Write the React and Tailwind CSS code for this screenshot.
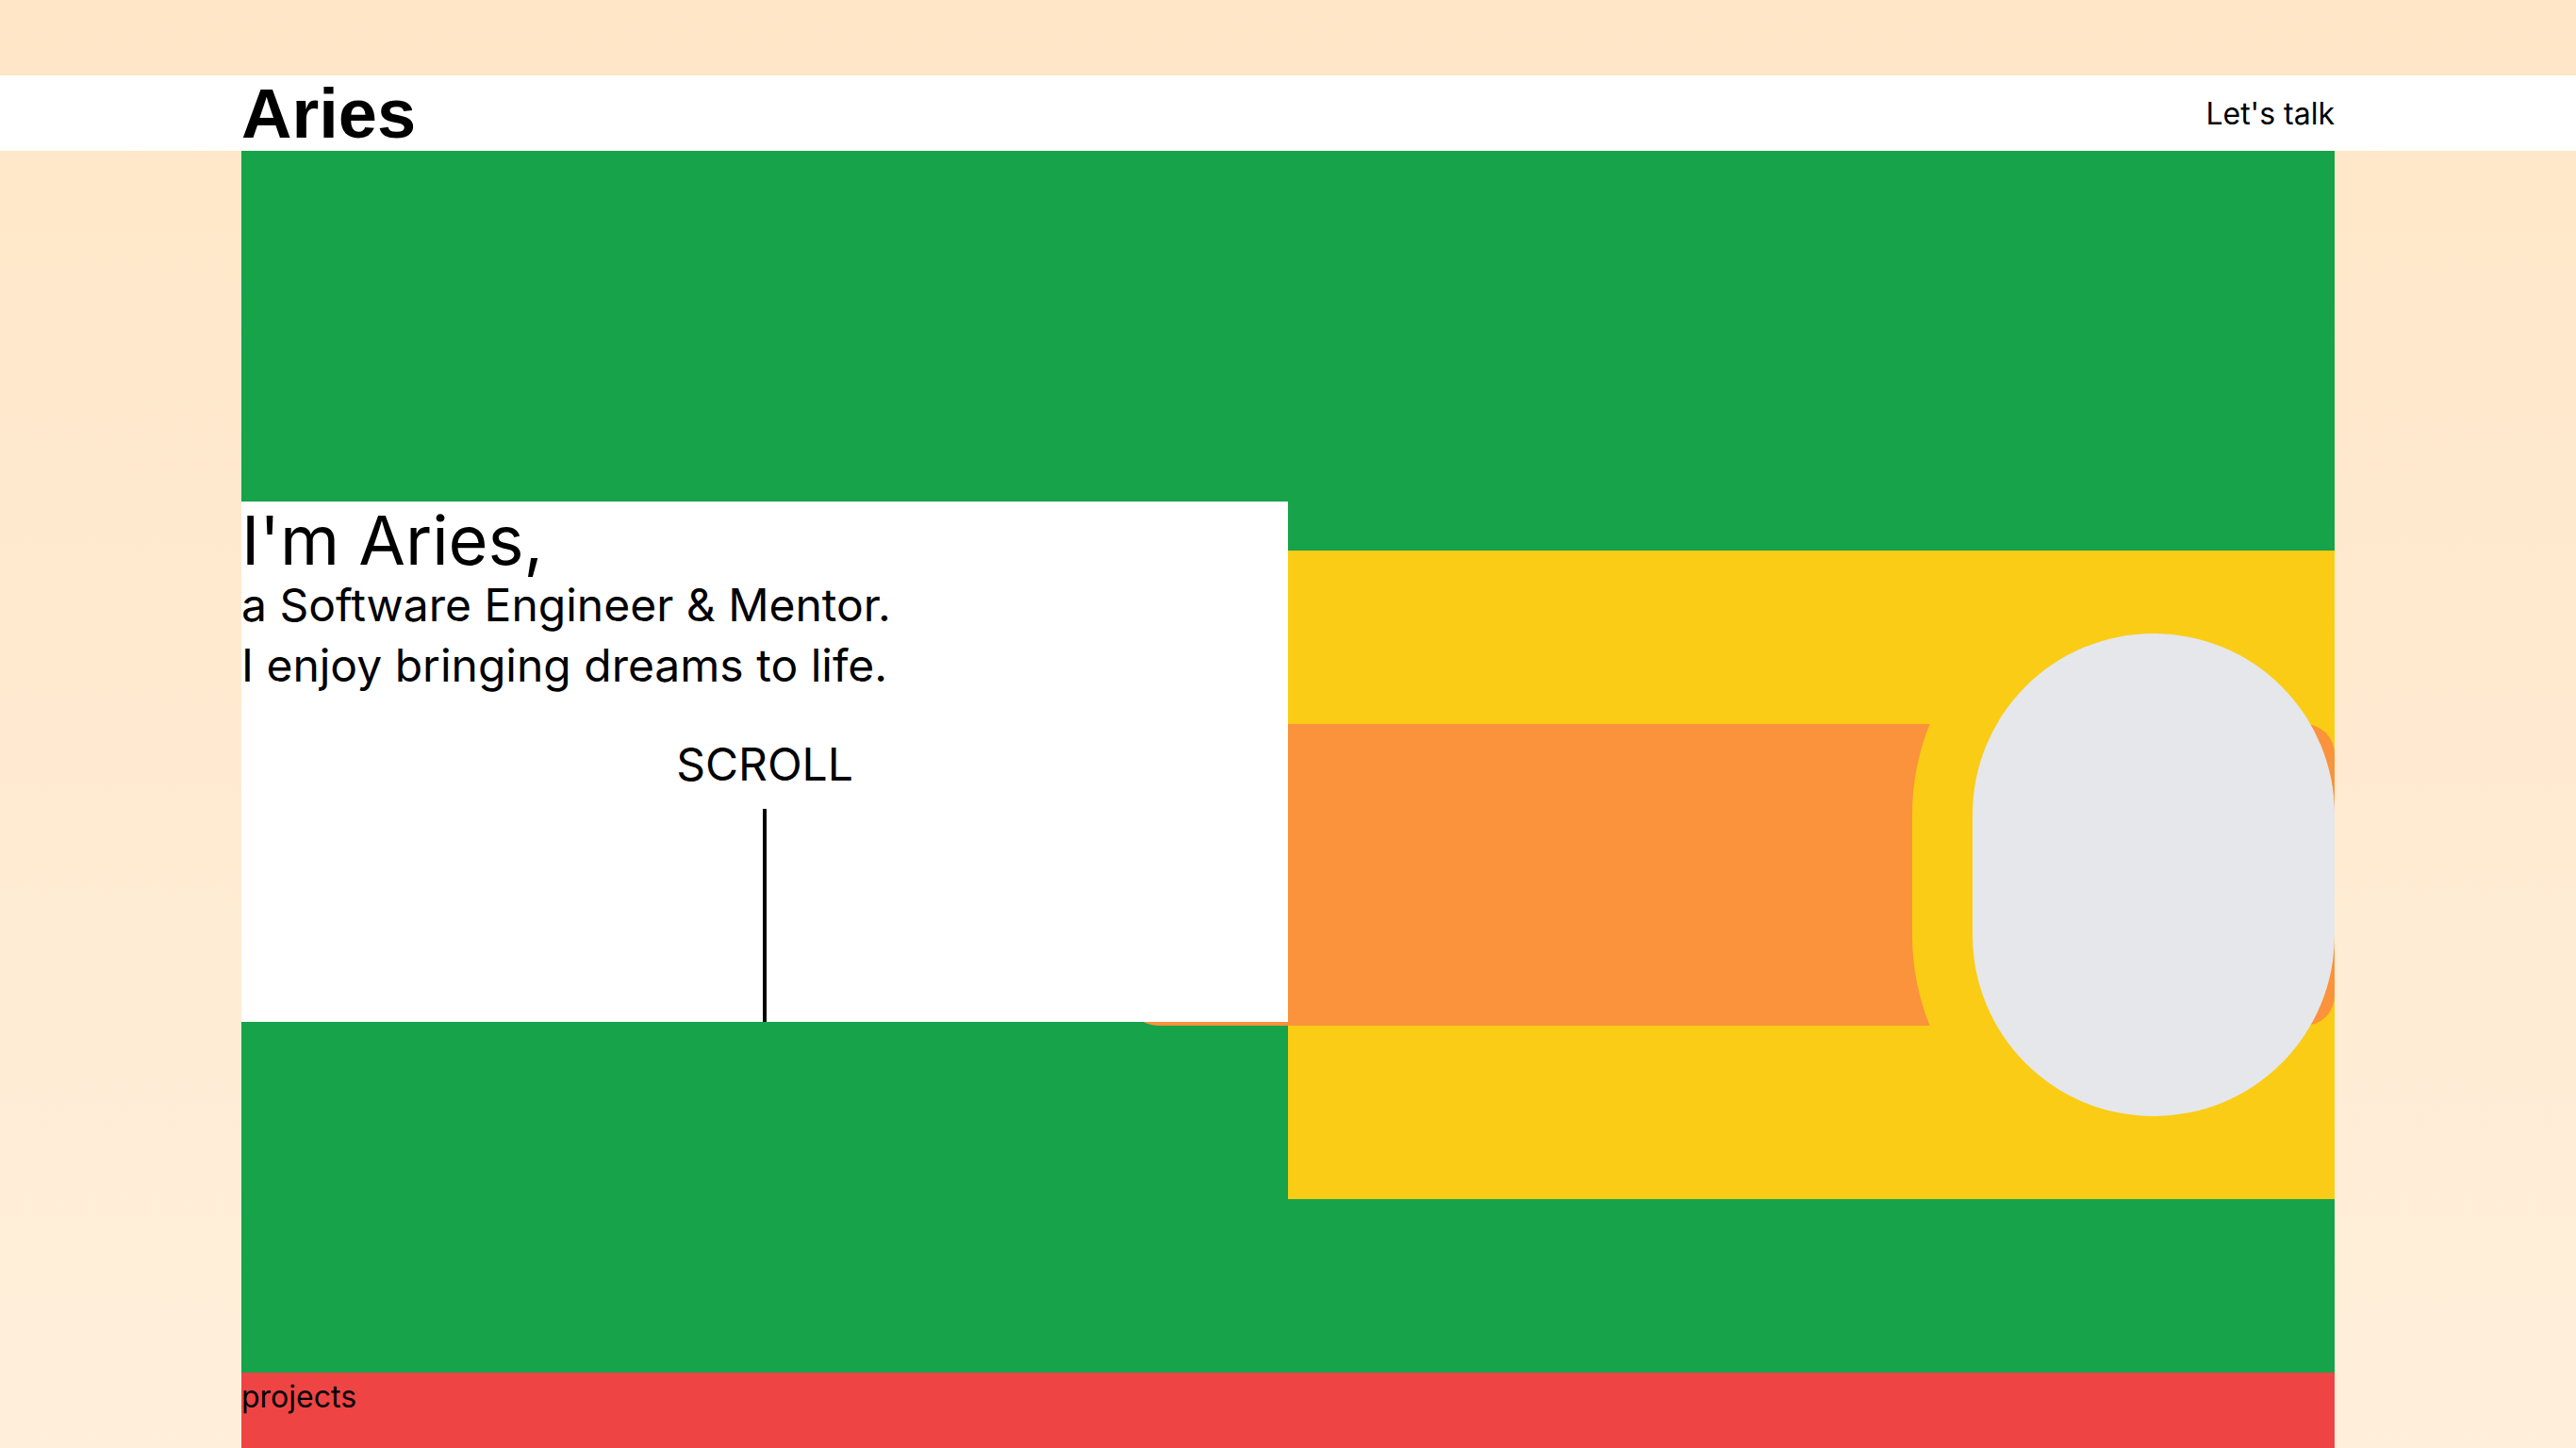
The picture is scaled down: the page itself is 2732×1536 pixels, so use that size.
import React from "react";

export default function App() {
  return (
    <div
      className="min-h-screen bg-gradient-to-b from-[#ffe6c7] to-[#fff1e0] text-black"
      style={{ fontFamily: "Inter, 'Noto Sans', sans-serif" }}
    >
      <div className="h-20" />
      <header className="h-20 bg-white">
        <div className="mx-[256px] flex h-full items-center justify-between">
          <div
            className="pt-[2px] text-[74px] font-bold leading-none"
            style={{ fontFamily: "'Liberation Sans', Arial, sans-serif" }}
          >
            Aries
          </div>
          <a className="pt-[1px] text-[32px] leading-[48px]">Let's talk</a>
        </div>
      </header>
      <main className="mx-[256px]">
        <section className="relative flex h-[1296px] items-center bg-[#16a34a]">
          <div className="absolute right-0 top-[608px] z-0 h-[320px] w-[1280px] rounded-[32px] bg-[#fb923c]" />
          <div className="relative z-20 flex h-[552px] w-1/2 flex-col bg-white">
            <div>
              <h1 className="text-[72px] font-normal leading-[82px]">I'm Aries,</h1>
              <p className="text-[48px] leading-[56px]">a Software Engineer &amp; Mentor.</p>
              <p className="text-[48px] leading-[72px]">I enjoy bringing dreams to life.</p>
            </div>
            <div className="mt-[40px] flex flex-1 flex-col items-center">
              <span className="text-[48px] leading-[58px]">SCROLL</span>
              <div className="mt-[18px] w-1 flex-1 bg-black" />
            </div>
          </div>
          <div className="mt-[240px] flex h-[688px] w-1/2 items-center justify-end bg-[#facc15]">
            <div className="relative z-10 h-[512px] w-[384px]">
              <div className="absolute -left-16 -top-16 h-[640px] w-[256px] overflow-hidden">
                <div className="h-[640px] w-[512px] rounded-full bg-[#facc15]" />
              </div>
              <div className="relative h-[512px] w-[384px] rounded-full bg-[#e5e7eb]" />
            </div>
          </div>
        </section>
        <section className="h-[500px] bg-[#ef4444]">
          <h2 className="pt-[2px] text-[32px] leading-[48px]">projects</h2>
        </section>
      </main>
    </div>
  );
}
